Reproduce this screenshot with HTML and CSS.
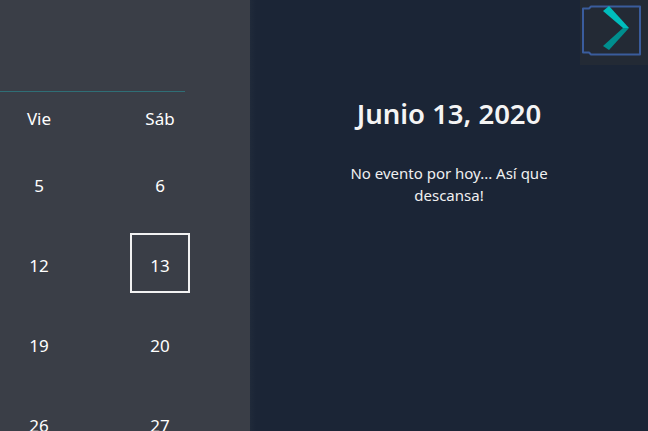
FILE: index.html
```html
<!DOCTYPE html>
<html lang="es">
<head>
<meta charset="utf-8">
<link rel="stylesheet" href="styles.css">
</head>
<body>
<div class="app">
  <aside class="cal">
    <div class="cal-head">
      <div class="wd">Vie</div>
      <div class="wd">Sáb</div>
    </div>
    <div class="cal-grid">
      <div class="day"><span>5</span></div>
      <div class="day"><span>6</span></div>
      <div class="day"><span>12</span></div>
      <div class="day sel"><span>13</span></div>
      <div class="day"><span>19</span></div>
      <div class="day"><span>20</span></div>
      <div class="day"><span>26</span></div>
      <div class="day"><span>27</span></div>
    </div>
  </aside>
  <main class="events">
    <h1 class="date">Junio 13, 2020</h1>
    <p class="msg">No evento por hoy... Así que descansa!</p>
  </main>
  <button class="toggle" aria-label="Siguiente">
    <svg width="60" height="53" viewBox="0 0 60 53">
      <path d="M9 3.5 H58 V51.5 H9 L7 49.5 H1 V5.5 H7 Z" fill="none" stroke="#3a5c9c" stroke-width="2" stroke-linejoin="round"/>
      <polygon points="21,8 27,3 47,25 41,25" fill="#00bdbd"/>
      <polygon points="41,25 47,25 27,47 21,43" fill="#008e8e"/>
    </svg>
  </button>
</div>
</body>
</html>
```
FILE: styles.css
```css
html, body {
  margin: 0;
  padding: 0;
  height: 100%;
  overflow: hidden;
}
body {
  font-family: "Noto Sans", "Open Sans", sans-serif;
  color: #fff;
  background: #1b2536;
}
.app {
  display: flex;
  height: 431px;
  position: relative;
}
.cal {
  width: 250px;
  flex: none;
  background: #3a3e47;
  padding-top: 91px;
  box-sizing: border-box;
  overflow: hidden;
}
.cal-head {
  width: 185px;
  border-top: 1px solid #2f6e76;
  display: grid;
  grid-template-columns: 78px 164px;
  height: 51px;
  font-size: 17px;
}
.wd {
  text-align: center;
  line-height: 51px;
  padding-top: 1px;
}
.cal-grid {
  display: grid;
  grid-template-columns: 78px 164px;
  grid-auto-rows: 80px;
  font-size: 17px;
}
.day {
  display: flex;
  align-items: center;
  justify-content: center;
}
.day span {
  width: 56px;
  height: 56px;
  display: flex;
  align-items: center;
  justify-content: center;
  padding-top: 5px;
  box-sizing: border-box;
  border: 2px solid transparent;
}
.day.sel span {
  width: 60px;
  height: 60px;
  border-color: #f2f2f2;
}
.events {
  flex: 1;
  background: linear-gradient(to right, #202a3a 0, #1b2536 6px);
  text-align: center;
  padding-top: 95px;
}
.date {
  margin: 0;
  font-size: 27.5px;
  font-weight: 600;
  line-height: 38px;
  color: #f4f4f4;
}
.msg {
  margin: 29px auto 0;
  width: 225px;
  font-size: 15px;
  line-height: 22px;
  color: #f0f0f0;
}
.toggle {
  position: absolute;
  top: 0;
  right: 0;
  width: 68px;
  height: 65px;
  background: #232a35;
  border: 0;
  display: flex;
  align-items: flex-start;
  justify-content: flex-start;
  padding: 3px 0 0 2px;
  box-sizing: border-box;
}
.toggle svg {
  display: block;
}
```
